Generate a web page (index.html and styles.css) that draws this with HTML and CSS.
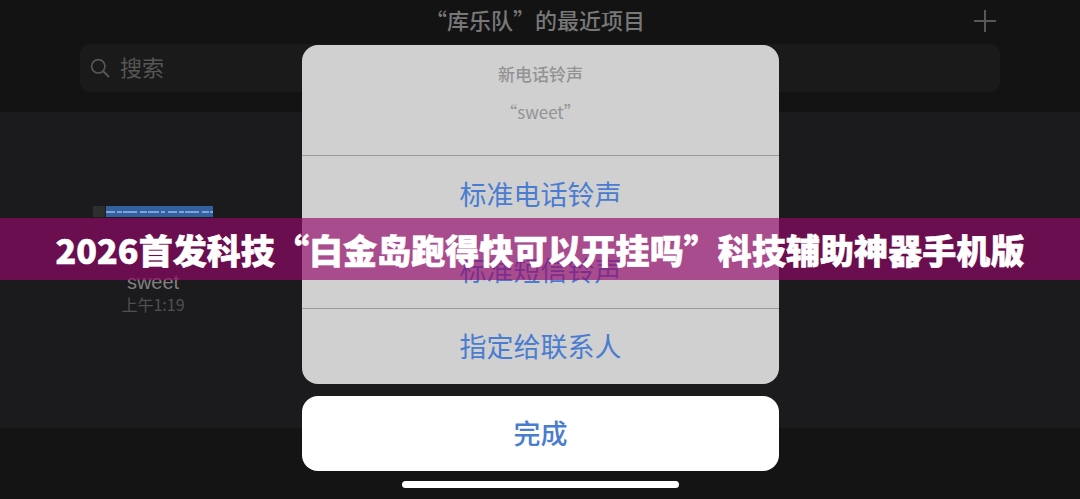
FILE: index.html
```html
<!DOCTYPE html>
<html lang="zh-CN">
  <head>
    <meta charset="utf-8">
    <title>2026首发科技</title>
    <link rel="stylesheet" href="styles.css">
  </head>
  <body>
    <div class="screen">
      <div class="top">
        <div class="top_title">
          <span class="top_title__text">“库乐队”的最近项目</span>
          <svg class="top_plus" width="24" height="24" viewBox="0 0 24 24">
            <path d="M12 1V23M1 12H23" stroke="#585858" stroke-width="2" fill="none"/>
          </svg>
        </div>
        <div class="search">
          <svg width="20" height="20" viewBox="0 0 20 20">
            <circle cx="8.3" cy="8.3" r="6.7" stroke="#565656" stroke-width="1.7" fill="none"/>
            <path d="M13.2 13.2L19 19" stroke="#565656" stroke-width="2" fill="none"/>
          </svg>
          <span class="search__text">搜索</span>
        </div>
      </div>

      <div class="list">
        <div class="song">
          <div class="song_wave">
            <div class="song_wave__thumb"></div>
            <svg class="song_wave__bars" width="107" height="11" viewBox="0 0 107 11">
              <rect width="107" height="11" fill="#33609f"/>
              <path d="M0 6H107" stroke="#7fa3d6" stroke-width="2" stroke-dasharray="9 2 5 1 14 3 7 1 11 2 4 3"/>
            </svg>
          </div>
          <div class="song_name">sweet</div>
          <div class="song_time">上午1:19</div>
        </div>
      </div>

      <div class="bottom"></div>

      <div class="sheet">
        <div class="sheet_group">
          <div class="sheet_head">
            <div class="sheet_head__title">新电话铃声</div>
            <div class="sheet_head__name">“sweet”</div>
          </div>
          <div class="sheet_item sheet_item__line">标准电话铃声</div>
          <div class="sheet_item">标准短信铃声</div>
          <div class="sheet_item sheet_item__line">指定给联系人</div>
        </div>
        <div class="sheet_done">完成</div>
        <div class="sheet_home"></div>
      </div>

      <div class="banner">2026首发科技“白金岛跑得快可以开挂吗”科技辅助神器手机版</div>
    </div>
  </body>
</html>
```

FILE: styles.css
```css
html, body {
  padding: 0px; margin: 0px;
  background: #131313;
  font-family: "Noto Sans CJK SC", "Liberation Sans", sans-serif;
}

.screen {
  position: relative;
  width: 1080px; height: 499px;
  overflow: hidden;
  display: flex;
  flex-direction: column;
}

/* dimmed page behind the sheet */
.top {
  height: 112px;
  background: #131313;
  box-sizing: border-box;
  padding: 0 80px;
}

.top_title {
  height: 40px;
  margin-bottom: 4px;
  display: flex;
  align-items: center;
  justify-content: center;
  position: relative;
}

.top_title__text {
  color: #787878;
  font-size: 22px;
  font-weight: 500;
  padding: 0 10px 2px 0;
}

.top_plus {
  position: absolute;
  right: 3px; top: 9px;
}

.search {
  height: 48px;
  background: #1a1a1a;
  border-radius: 10px;
  display: flex;
  align-items: center;
  gap: 10px;
  padding-left: 10px;
}

.search__text {
  color: #565656;
  font-size: 22px;
  padding-bottom: 5px;
}

.list {
  flex: 1;
  background: #1b1b1d;
  padding: 94px 0 0 93px;
}

.song {
  width: 120px;
  display: flex;
  flex-direction: column;
  align-items: center;
}

.song_wave {
  width: 100%;
  display: flex;
  gap: 1px;
}

.song_wave__thumb {
  width: 12px; height: 11px;
  background: #2e2e2e;
}

.song_wave__bars {
  filter: blur(0.6px);
}

.song_name {
  margin-top: 53px;
  color: #808080;
  font-size: 20px;
  line-height: 24px;
  font-family: "Liberation Sans", sans-serif;
}

.song_time {
  margin-top: -1px;
  color: #505050;
  font-size: 16px;
  line-height: 22px;
}

.bottom {
  height: 71px;
  background: #141414;
}

/* action sheet */
.sheet {
  position: absolute;
  left: 302px; top: 45px;
  width: 477px;
  display: flex;
  flex-direction: column;
  align-items: center;
}

.sheet_group {
  width: 100%;
  background: #d0d0d0;
  border-radius: 16px;
  overflow: hidden;
  display: grid;
  grid-template-rows: 110px 77px 76px 76px;
}

.sheet_head {
  box-sizing: border-box;
  padding-top: 17px;
  text-align: center;
  color: #939393;
  font-size: 17px;
}

.sheet_head__title {
  line-height: 24px;
  font-weight: 500;
}

.sheet_head__name {
  margin-top: 14px;
  line-height: 24px;
}

.sheet_item {
  box-sizing: border-box;
  padding-bottom: 2px;
  display: flex;
  align-items: center;
  justify-content: center;
  color: #4a7cd0;
  font-size: 27px;
}

.sheet_item__line {
  border-top: 1px solid #9a9a9a;
}

.sheet_done {
  width: 100%; height: 75px;
  margin-top: 12px;
  padding-bottom: 2px;
  box-sizing: border-box;
  background: #fff;
  border-radius: 16px;
  display: flex;
  align-items: center;
  justify-content: center;
  color: #4a7cd0;
  font-size: 27px;
  font-weight: 500;
}

.sheet_home {
  width: 277px; height: 7px;
  margin-top: 10px;
  background: #fff;
  border-radius: 4px;
}

/* title strip across the shot */
.banner {
  position: absolute;
  left: 0; top: 218px;
  width: 100%; height: 62px;
  background: rgba(148, 8, 107, 0.66);
  display: flex;
  align-items: center;
  justify-content: center;
  color: #fff;
  font-size: 34px;
  font-weight: 900;
  letter-spacing: 0.07px;
  -webkit-text-stroke: 0.6px #fff;
  white-space: nowrap;
}
```
